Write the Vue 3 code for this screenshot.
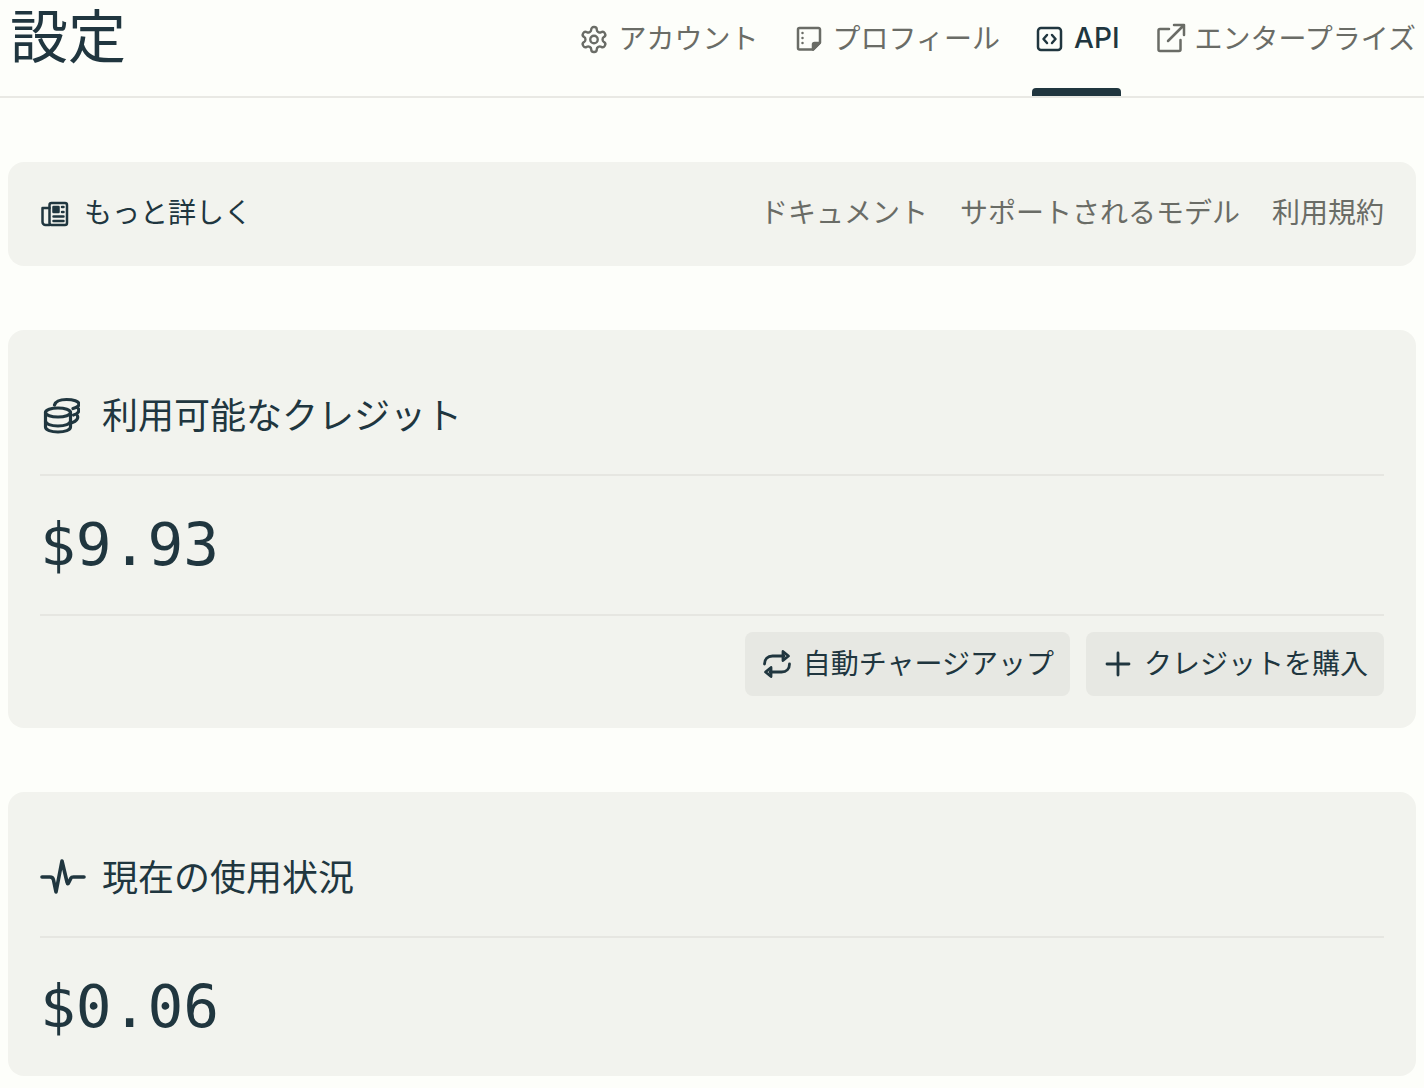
<script setup>
const tabs = [
  { label: 'アカウント', icon: 'gear', first: true },
  { label: 'プロフィール', icon: 'note' },
  { label: 'API', icon: 'code', active: true },
  { label: 'エンタープライズ', icon: 'ext' },
]
const links = ['ドキュメント', 'サポートされるモデル', '利用規約']
</script>

<template>
  <div class="page">
    <header class="top">
      <h1 class="title">設定</h1>
      <nav class="tabs">
        <div v-for="t in tabs" :key="t.label" class="tab" :class="{ active: t.active, first: t.first }">
          <svg class="ico" viewBox="0 0 32 32" fill="none" stroke="currentColor" stroke-width="2.500" stroke-linecap="round" stroke-linejoin="round">
            <g v-if="t.icon === 'gear'" transform="translate(0 2.500) scale(1.250)" stroke-width="1.900">
              <path d="M12.220 2h-.44a2 2 0 0 0-2 2v.18a2 2 0 0 1-1 1.730l-.43.25a2 2 0 0 1-2 0l-.15-.08a2 2 0 0 0-2.730.73l-.22.38a2 2 0 0 0 .73 2.730l.15.1a2 2 0 0 1 1 1.720v.51a2 2 0 0 1-1 1.740l-.15.09a2 2 0 0 0-.73 2.730l.22.38a2 2 0 0 0 2.730.73l.15-.08a2 2 0 0 1 2 0l.43.25a2 2 0 0 1 1 1.730V20a2 2 0 0 0 2 2h.44a2 2 0 0 0 2-2v-.18a2 2 0 0 1 1-1.730l.43-.25a2 2 0 0 1 2 0l.15.08a2 2 0 0 0 2.730-.73l.22-.39a2 2 0 0 0-.73-2.730l-.15-.08a2 2 0 0 1-1-1.740v-.5a2 2 0 0 1 1-1.740l.15-.09a2 2 0 0 0 .73-2.730l-.22-.38a2 2 0 0 0-2.730-.73l-.15.08a2 2 0 0 1-2 0l-.43-.25a2 2 0 0 1-1-1.730V4a2 2 0 0 0-2-2z" />
              <circle cx="12" cy="12" r="3" />
            </g>
            <g v-else-if="t.icon === 'note'" transform="translate(-1 0)">
              <path d="M7.500 6h19a1.500 1.500 0 0 1 1.500 1.500v13l-7 7H7.500A1.500 1.500 0 0 1 6 26V7.500A1.500 1.500 0 0 1 7.500 6z" />
              <path d="M27.500 21h-5a1.500 1.500 0 0 0-1.500 1.500v5z" fill="currentColor" />
              <path d="M10.500 11v.1M10.500 16v.1M10.500 21v.1" />
            </g>
            <template v-else-if="t.icon === 'code'">
              <rect x="6" y="6" width="23" height="22" rx="3" />
              <path d="M15 13l-3.500 4 3.500 4M20 13l3.500 4-3.500 4" />
            </template>
            <g v-else transform="translate(-2 0)">
              <path d="M16 7H7a1.500 1.500 0 0 0-1.500 1.500v19A1.500 1.500 0 0 0 7 29h19a1.500 1.500 0 0 0 1.500-1.500V18" />
              <path d="M15 19 31 3M21 3h10v10" />
            </g>
          </svg>
          <span class="tab-label">{{ t.label }}</span>
          <i v-if="t.active" class="bar"></i>
        </div>
      </nav>
    </header>

    <main class="main">
      <section class="card learn">
        <div class="learn-l">
          <svg class="ico" viewBox="0 0 32 32" fill="none" stroke="currentColor" stroke-width="2.500" stroke-linecap="round" stroke-linejoin="round">
            <g transform="translate(0 -2)">
              <rect x="9.500" y="7" width="17.500" height="22" rx="2" />
              <path d="M9.500 12H2.500v14a3 3 0 0 0 3 3h4" />
              <rect x="13.500" y="11" width="5" height="5" fill="currentColor" />
              <path d="M22 11h1.500M22 16h1.500M13.500 20.500h10M13.500 25h10" />
            </g>
          </svg>
          <span class="lift">もっと詳しく</span>
        </div>
        <div class="links">
          <a v-for="l in links" :key="l" class="lift">{{ l }}</a>
        </div>
      </section>

      <section class="card">
        <h2 class="head">
          <svg class="ico big" viewBox="0 0 40 40" fill="none" stroke="currentColor" stroke-width="3.200" stroke-linecap="round" stroke-linejoin="round">
            <ellipse cx="18" cy="17.500" rx="12.500" ry="4.500" />
            <path d="M5.500 17.500V32c0 3 5.500 5 12.500 5s12.500-2 12.500-5V17.500" />
            <path d="M5.500 26c0 3 5.500 5 12.500 5s12.500-2 12.500-5" />
            <path d="M14.500 10c1-3.500 6-5.500 12-5.500 7 0 12.500 2 12.500 4.500 0 2-2.500 3.500-6 4.500M38.500 14c1 2-.5 5-5 6M37.500 21c1 2.500-1.500 5.500-5 6.500" />
          </svg>
          利用可能なクレジット
        </h2>
        <div class="amount">$9.93</div>
        <div class="actions">
          <button class="btn">
            <svg class="ico" viewBox="0 0 32 32" fill="none" stroke="currentColor" stroke-width="2.800" stroke-linecap="round" stroke-linejoin="round">
              <path d="M3.500 16c0-5 3-8 8-8H23" />
              <path d="M22 3.500 27.500 8 22 12.500z" />
              <path d="M28.500 16c0 5-3 8-8 8H9" />
              <path d="M10 19.500 4.500 24l5.500 4.500z" />
            </svg>
            <span class="btn-label">自動チャージアップ</span>
          </button>
          <button class="btn">
            <svg class="ico" viewBox="0 0 32 32" fill="none" stroke="currentColor" stroke-width="2.800" stroke-linecap="round">
              <path d="M16 5v22M5 16h22" />
            </svg>
            <span class="btn-label">クレジットを購入</span>
          </button>
        </div>
      </section>

      <section class="card">
        <h2 class="head">
          <svg class="ico big wide" viewBox="0 0 46 40" fill="none" stroke="currentColor" stroke-width="3.600" stroke-linecap="round" stroke-linejoin="round">
            <path d="M2 20h8c2 0 3 .5 3.500 3l2.500 12 6-31 5 21c.5 2 1 2.500 2 0l2-4c.5-1 1.500-1 2.500-1H44" />
          </svg>
          現在の使用状況
        </h2>
        <div class="amount last">$0.06</div>
      </section>
    </main>
  </div>
</template>

<style>
html, body { background: #fdfefa; }
</style>

<style scoped>
.page {
  width: 1424px;
  height: 1088px;
  overflow: hidden;
  background: #fdfefa;
  color: #20363f;
  font-family: "Inter", "Noto Sans CJK JP", sans-serif;
}
.top {
  height: 96px;
  box-sizing: content-box;
  padding: 0 8px;
  display: flex;
  justify-content: space-between;
  border-bottom: 2px solid #e9e9e4;
}
.title {
  margin: 0 0 0 2px;
  font-size: 58px;
  font-weight: 400;
  line-height: 74px;
}
.tabs {
  display: flex;
  gap: 32px;
  color: #6a6c66;
  font-size: 28px;
}
.tab {
  position: relative;
  display: flex;
  align-items: center;
  gap: 8px;
  height: 76px;
  font-weight: 400;
}
.tab.first {
  margin-right: 2px;
}
.tab-label {
  padding-bottom: 2px;
}
.tab.active {
  color: #20363f;
  font-weight: 500;
  margin-right: 2px;
}
.tab.active .tab-label {
  padding: 0 1px 0 2px;
}
.bar {
  position: absolute;
  left: 0;
  right: 0;
  top: 88px;
  height: 8px;
  background: #20363f;
  border-radius: 4px 4px 0 0;
}
.ico {
  width: 32px;
  height: 32px;
  flex: none;
}
.main {
  padding: 64px 8px 0;
  display: flex;
  flex-direction: column;
  gap: 64px;
}
.card {
  background: #f2f3ee;
  border-radius: 16px;
  padding: 32px;
}
.learn {
  display: flex;
  justify-content: space-between;
  align-items: center;
  height: 104px;
  box-sizing: border-box;
  font-size: 28px;
  line-height: 40px;
}
.learn-l {
  display: flex;
  align-items: center;
  gap: 12px;
}
.lift {
  padding-bottom: 2px;
}
.links {
  display: flex;
  gap: 32px;
  color: #6a6c66;
}
.head {
  margin: 0;
  padding-top: 27px;
  display: flex;
  align-items: flex-start;
  gap: 22px;
  font-size: 36px;
  font-weight: 400;
  line-height: 54px;
  border-bottom: 2px solid #e6e6e1;
  height: 85px;
}
.big {
  width: 40px;
  height: 40px;
  margin-top: 6px;
}
.wide {
  width: 46px;
  margin-right: -6px;
}
.amount {
  font-family: "DejaVu Sans Mono", monospace;
  font-size: 59.5px;
  line-height: 74px;
  padding: 32px 0;
  border-bottom: 2px solid #e6e6e1;
}
.amount.last {
  border-bottom: 0;
  padding-bottom: 0;
}
.actions {
  display: flex;
  justify-content: flex-end;
  gap: 16px;
  padding-top: 16px;
}
.btn {
  display: flex;
  align-items: center;
  gap: 10px;
  height: 64px;
  padding: 0 16px;
  border: 0;
  border-radius: 8px;
  background: #e7e8e3;
  color: #20363f;
  font: inherit;
  font-size: 28px;
}
.btn-label {
  padding-bottom: 4px;
}
</style>
